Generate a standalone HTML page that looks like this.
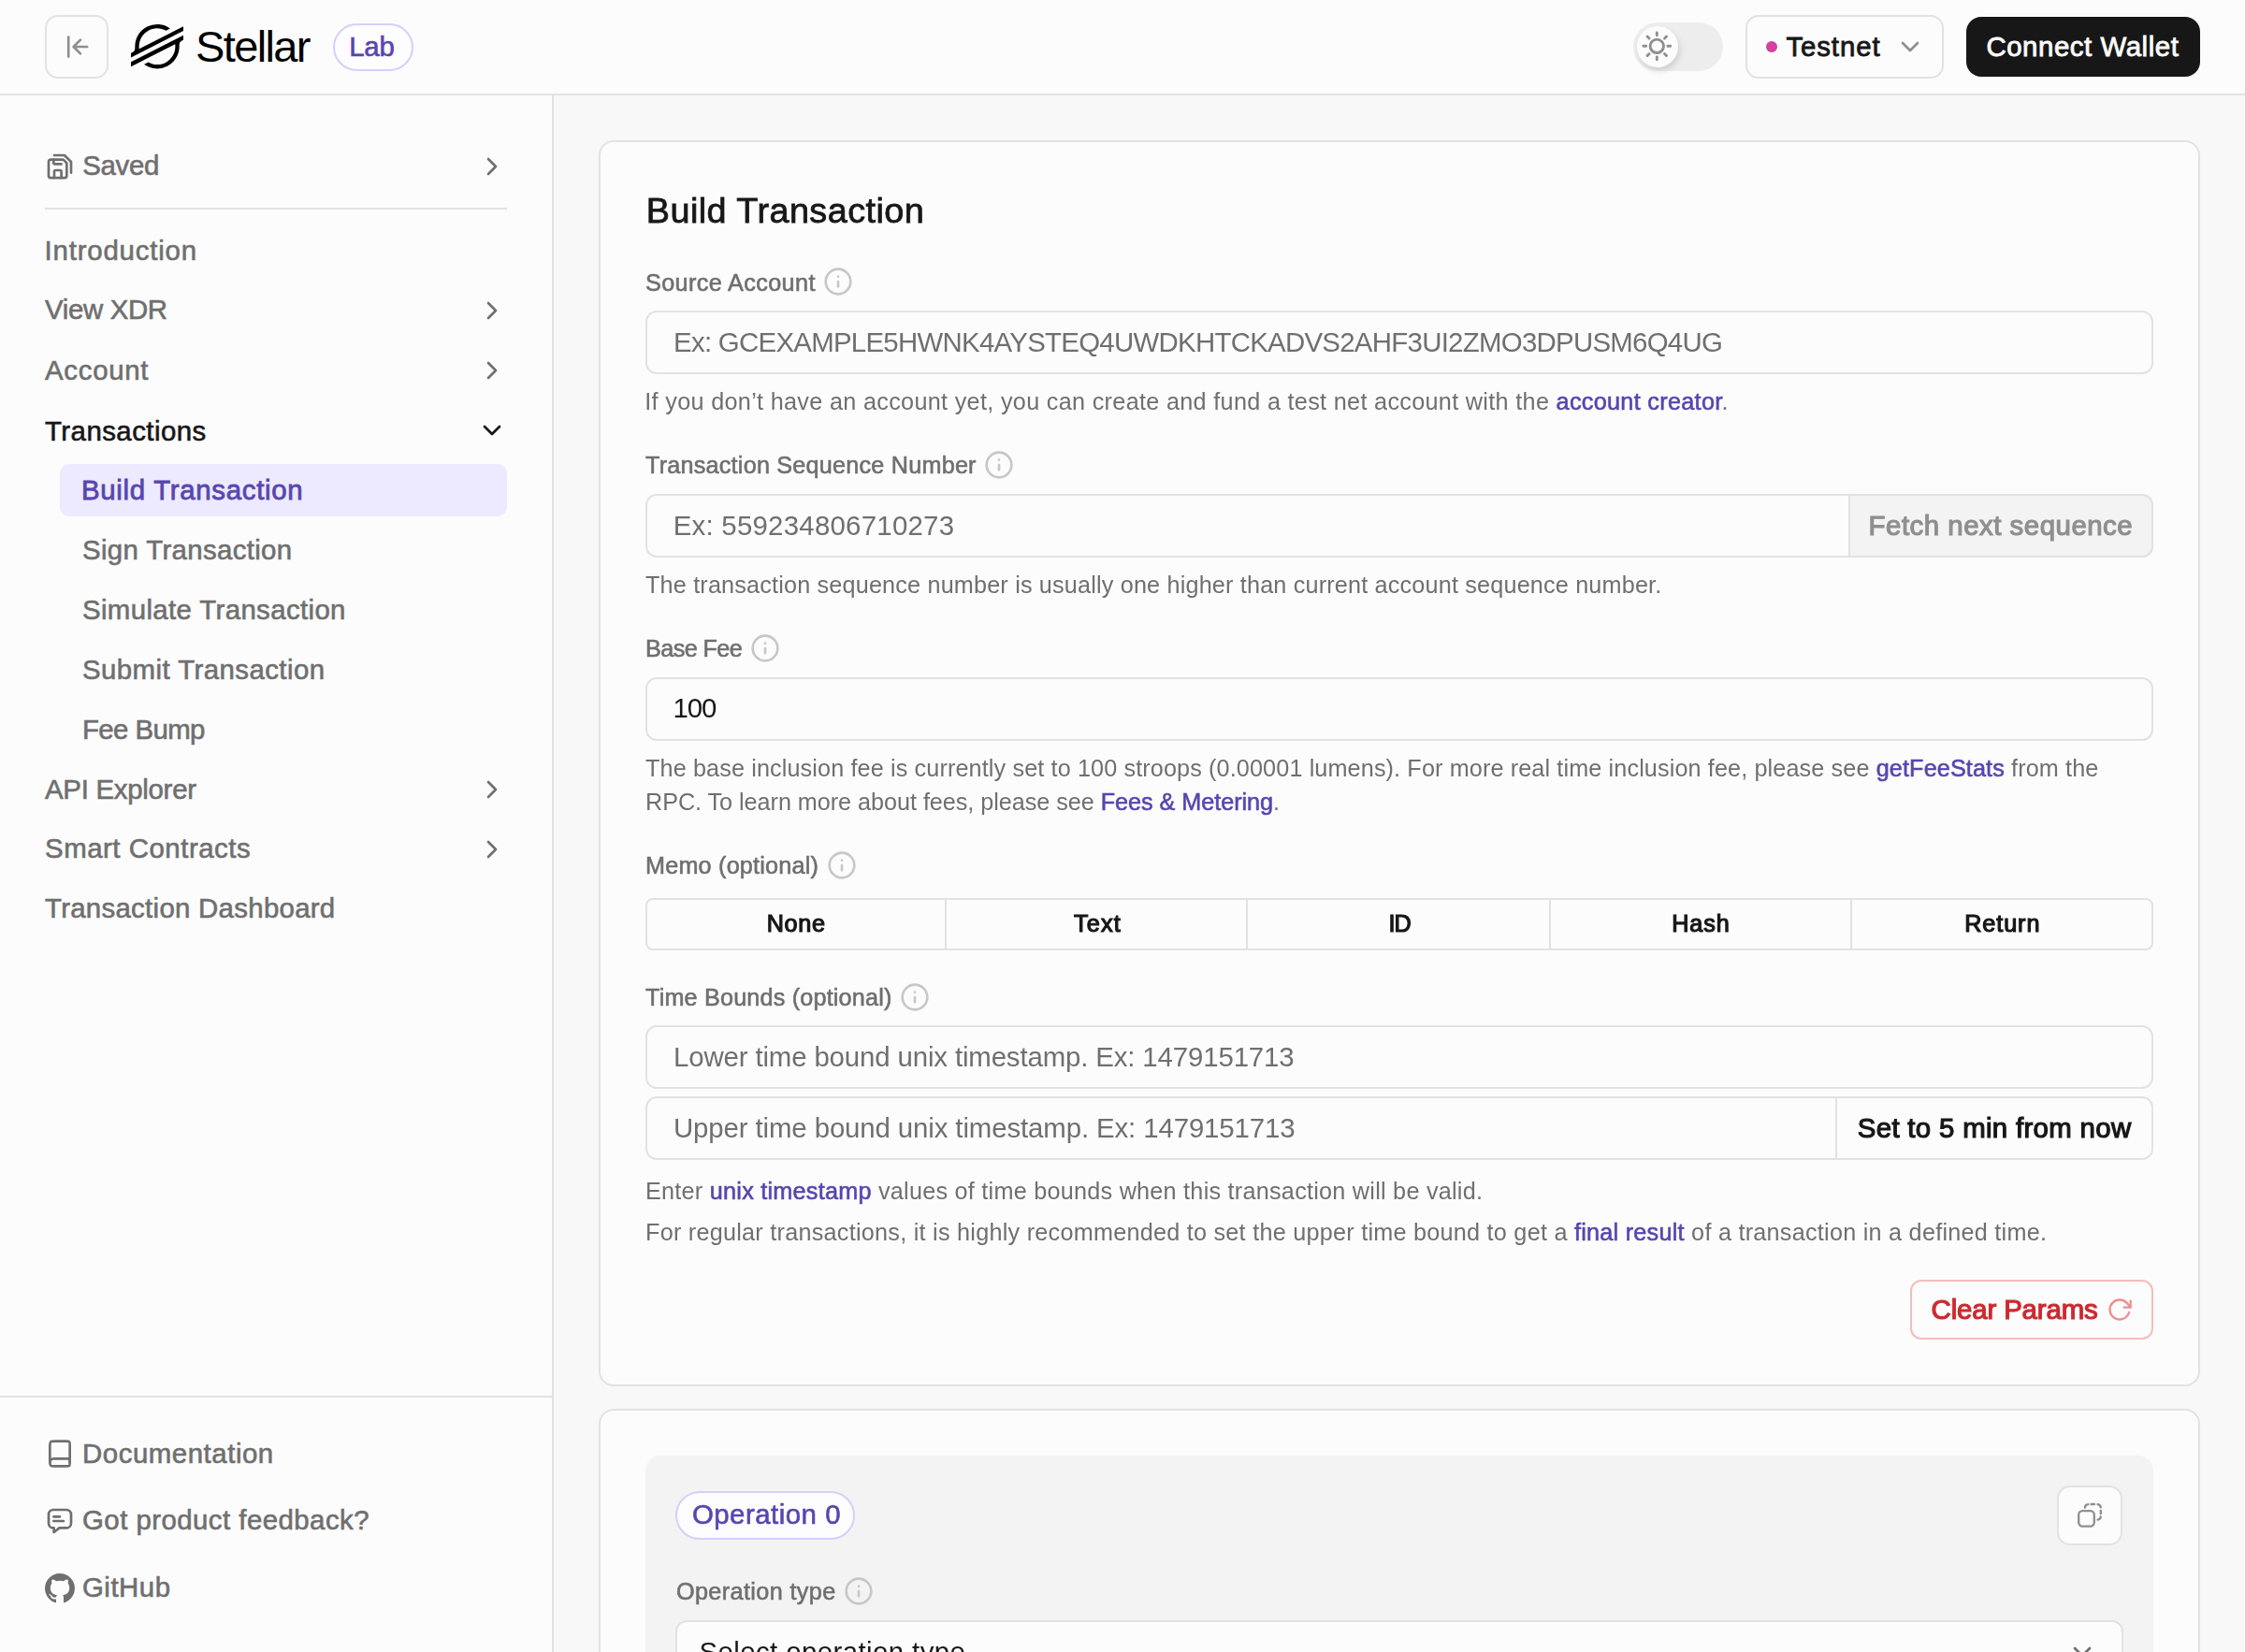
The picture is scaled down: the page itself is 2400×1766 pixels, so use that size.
<!DOCTYPE html>
<html lang="en">
<head>
<meta charset="utf-8">
<title>Stellar Lab - Build Transaction</title>
<style>
@media (min-width: 1800px) { html { zoom: 2; } }
* { box-sizing: border-box; margin: 0; padding: 0; }
html, body { background: #f8f8f8; }
body { width: 1200px; height: 883px; overflow: hidden; position: relative; font-family: "Liberation Sans", sans-serif; color: #171717; -webkit-font-smoothing: antialiased; }
.a { position: absolute; white-space: nowrap; }
.f12 { font-size: 12.6px; line-height: 18px; }
.f14 { font-size: 14.7px; line-height: 20px; }
.f19 { font-size: 18.9px; line-height: 28px; }
.b { font-weight: 700; }
.m { -webkit-text-stroke: 0.3px currentColor; }
.sb { -webkit-text-stroke: 0.4px currentColor; }
.sb2 { -webkit-text-stroke: 0.6px currentColor; }
.g11 { color: #6f6f6f; }
.g9 { color: #8f8f8f; }
.lnk { color: #5746af; }
.box { position: absolute; border: 1px solid #e2e2e2; }
svg { position: absolute; overflow: visible; }
.ic { fill: none; stroke-width: 2; stroke-linecap: round; stroke-linejoin: round; }
</style>
</head>
<body>

<!-- HEADER -->
<div class="box" style="left:0;top:0;width:1200px;height:51px;background:#fcfcfc;border-width:0 0 1px 0;"></div>
<div class="box" style="left:24px;top:8px;width:34px;height:34px;border-radius:7px;background:#fcfcfc;"></div>
<svg style="left:24px;top:8px" width="34" height="34" viewBox="0 0 34 34"><g fill="none" stroke="#8f8f8f" stroke-width="1.33" stroke-linecap="round" stroke-linejoin="round"><path d="M12.6 11.8V22.3"/><path d="M22.6 17H15.4M19 13.3L15.3 17L19 20.7"/></g></svg>
<svg style="left:70px;top:13px" width="28" height="23.7" viewBox="0 0 236.36 200"><path fill="#000" d="M203,26.16l-28.46,14.5-137.43,70a82.49,82.49,0,0,1-.7-10.69A81.87,81.87,0,0,1,158.2,28.6l16.29-8.3,2.43-1.24A100,100,0,0,0,18.18,100q0,3.82.29,7.61a18.19,18.19,0,0,1-9.88,17.58L0,129.57V150l25.29-12.89,0,0,8.19-4.18,8.07-4.11v0L186.43,55l16.28-8.290,33.65-17.15V9.14Z"/><path fill="#000" d="M236.36,50,49.78,145,33.5,153.310,0,170.38v20.41l33.27-16.95,28.46-14.5L199.3,89.24A83.450,83.450,0,0,1,200,100,81.87,81.87,0,0,1,78.09,171.36l-1,.53-17.66,9A100,100,0,0,0,218.18,100c0-2.57-.1-5.14-.29-7.68a18.2,18.2,0,0,1,9.87-17.58l8.6-4.38Z"/></svg>
<div id="h_stellar" class="a" style="left:104.50px;top:11px;font-size:23.5px;line-height:28px;letter-spacing:-0.817px;color:#000;">Stellar</div>
<div class="box" style="left:178px;top:12.25px;width:43px;height:25.5px;border-radius:13px;border-color:#d7cff9;background:#fdfcfe;"></div>
<div id="h_lab" class="a f14 lnk m" style="left:186.6px;top:15.1px;letter-spacing:-0.1px;">Lab</div>

<!-- theme toggle -->
<div class="a" style="left:873px;top:12px;width:48px;height:26px;border-radius:13px;background:#ededed;"></div>
<div class="a" style="left:875px;top:14px;width:22px;height:22px;border-radius:11px;background:#fcfcfc;box-shadow:1px 2px 3px rgba(0,0,0,0.12);"></div>
<svg style="left:877.1px;top:16.2px" width="17.3" height="17.3" viewBox="0 0 24 24"><g class="ic" stroke="#8f8f8f" stroke-width="1.85"><path d="M12 2V4M12 20V22M4 12H2M6.31 6.31L4.9 4.9M17.69 6.31L19.1 4.9M6.31 17.69L4.9 19.1M17.69 17.69L19.1 19.1M22 12H20M17 12C17 14.76 14.76 17 12 17C9.24 17 7 14.76 7 12C7 9.24 9.24 7 12 7C14.76 7 17 9.24 17 12Z"/></g></svg>

<!-- network -->
<div class="box" style="left:933px;top:8px;width:106px;height:34px;border-radius:7px;background:#fcfcfc;"></div>
<div class="a" style="left:944px;top:21.85px;width:6px;height:6px;border-radius:3px;background:#d6409f;"></div>
<div id="h_testnet" class="a f14 sb" style="left:954.70px;top:14.86px;letter-spacing:0.458px;">Testnet</div>
<svg style="left:1013px;top:17px" width="16" height="16" viewBox="0 0 24 24"><path class="ic" stroke="#8f8f8f" d="M6 9l6 6 6-6"/></svg>

<!-- connect wallet -->
<div class="a" style="left:1051px;top:9px;width:125px;height:32px;border-radius:8px;background:#171717;"></div>
<div id="h_cw" class="a f14 sb" style="left:1061.70px;top:14.9px;color:#fcfcfc;letter-spacing:0.278px;">Connect Wallet</div>

<!-- SIDEBAR -->
<div class="box" style="left:0;top:51px;width:296px;height:832px;background:#fcfcfc;border-width:0 1px 0 0;"></div>

<!-- saved -->
<svg style="left:24px;top:81px" width="16" height="16" viewBox="0 0 24 24"><g class="ic" stroke="#6f6f6f"><path d="M7.5 3H15.7L21 8.3V17"/><path d="M4.6 6.5H14.75L17.5 9.25V19.5A1.6 1.6 0 0 1 15.9 21.1H4.6A1.6 1.6 0 0 1 3 19.5V8.1A1.6 1.6 0 0 1 4.6 6.5Z"/><path d="M7 6.5V9A1 1 0 0 0 8 10H13.2"/><path d="M7.5 21V16A1 1 0 0 1 8.5 15H12.2A1 1 0 0 1 13.2 16V21"/></g></svg>
<div id="s_saved" class="a f14 g11 m" style="left:44.10px;top:78.66px;letter-spacing:-0.150px;">Saved</div>
<svg style="left:255px;top:81px" width="16" height="16" viewBox="0 0 24 24"><path class="ic" stroke="#6f6f6f" d="M9 18l6-6-6-6"/></svg>
<div class="a" style="left:24px;top:111px;width:247px;height:1px;background:#e2e2e2;"></div>

<div id="s_intro" class="a f14 g11 m" style="left:23.80px;top:123.8px;letter-spacing:0.400px;">Introduction</div>
<div id="s_xdr" class="a f14 g11 m" style="left:24.00px;top:155.7px;letter-spacing:-0.170px;">View XDR</div>
<svg style="left:255px;top:158px" width="16" height="16" viewBox="0 0 24 24"><path class="ic" stroke="#6f6f6f" d="M9 18l6-6-6-6"/></svg>
<div id="s_acct" class="a f14 g11 m" style="left:24.00px;top:187.9px;letter-spacing:0.359px;">Account</div>
<svg style="left:255px;top:190px" width="16" height="16" viewBox="0 0 24 24"><path class="ic" stroke="#6f6f6f" d="M9 18l6-6-6-6"/></svg>
<div id="s_tx" class="a f14 m" style="left:24.00px;top:220.4px;color:#171717;letter-spacing:0.233px;">Transactions</div>
<svg style="left:255px;top:222px" width="16" height="16" viewBox="0 0 24 24"><path class="ic" stroke="#171717" d="M6 9l6 6 6-6"/></svg>

<div class="a" style="left:32px;top:248px;width:239px;height:28px;border-radius:5px;background:#ede9fe;"></div>
<div id="s_build" class="a f14 sb lnk" style="left:43.50px;top:251.8px;letter-spacing:0.352px;">Build Transaction</div>
<div id="s_sign" class="a f14 g11 m" style="left:44.00px;top:283.9px;letter-spacing:0.173px;">Sign Transaction</div>
<div id="s_sim" class="a f14 g11 m" style="left:44.00px;top:315.8px;letter-spacing:0.184px;">Simulate Transaction</div>
<div id="s_sub" class="a f14 g11 m" style="left:44.00px;top:347.9px;letter-spacing:0.220px;">Submit Transaction</div>
<div id="s_fee" class="a f14 g11 m" style="left:44.00px;top:379.9px;letter-spacing:-0.299px;">Fee Bump</div>

<div id="s_api" class="a f14 g11 m" style="left:24.00px;top:411.9px;letter-spacing:-0.136px;">API Explorer</div>
<svg style="left:255px;top:414px" width="16" height="16" viewBox="0 0 24 24"><path class="ic" stroke="#6f6f6f" d="M9 18l6-6-6-6"/></svg>
<div id="s_sc" class="a f14 g11 m" style="left:24.00px;top:443.6px;letter-spacing:0.263px;">Smart Contracts</div>
<svg style="left:255px;top:446px" width="16" height="16" viewBox="0 0 24 24"><path class="ic" stroke="#6f6f6f" d="M9 18l6-6-6-6"/></svg>
<div id="s_dash" class="a f14 g11 m" style="left:24.00px;top:475.7px;letter-spacing:0.145px;">Transaction Dashboard</div>

<div class="a" style="left:0;top:746px;width:295px;height:1px;background:#e2e2e2;"></div>
<svg style="left:24px;top:769px" width="16" height="16" viewBox="0 0 24 24"><g class="ic" stroke="#6f6f6f"><path d="M20 19V16H7A3 3 0 0 0 4 19"/><path d="M8.8 22H16.8C18.5 22 19.2 22 19.6 21.7C20 21.3 20 20.5 20 18.8V5.2C20 3.5 20 2.8 19.6 2.4C19.2 2 18.5 2 16.8 2H8.8C6.1 2 5.3 2 4.7 2.4C4 3 4 4.1 4 6.8V17.2C4 19.9 4 20.9 4.7 21.5C5.3 22 6.1 22 8.8 22Z"/></g></svg>
<div id="s_doc" class="a f14 g11 m" style="left:44.05px;top:767.1px;letter-spacing:0.267px;">Documentation</div>
<svg style="left:24px;top:805px" width="16" height="16" viewBox="0 0 24 24"><g class="ic" stroke="#6f6f6f"><path d="M7 8.5H12M7 12H15"/><path d="M7.2 17.5V21L11.6 17.5H17.3A3.7 3.7 0 0 0 21 13.8V6.7A3.7 3.7 0 0 0 17.3 3H6.7A3.7 3.7 0 0 0 3 6.7V13.8A3.7 3.7 0 0 0 6.7 17.5Z"/></g></svg>
<div id="s_fb" class="a f14 g11 m" style="left:44.00px;top:802.4px;letter-spacing:0.230px;">Got product feedback?</div>
<svg style="left:24px;top:841px" width="16" height="16" viewBox="0 0 16 16"><path fill="#6f6f6f" d="M8 0C3.58 0 0 3.58 0 8c0 3.54 2.29 6.53 5.47 7.59.4.07.55-.17.55-.38 0-.19-.01-.82-.01-1.49-2.01.37-2.53-.49-2.69-.94-.09-.23-.48-.94-.82-1.13-.28-.15-.68-.52-.01-.53.63-.01 1.08.58 1.23.82.72 1.21 1.87.87 2.33.66.07-.52.28-.87.51-1.07-1.78-.2-3.64-.89-3.640-3.95 0-.87.31-1.59.82-2.15-.08-.2-.36-1.02.08-2.12 0 0 .67-.21 2.2.82.64-.18 1.32-.27 2-.27.68 0 1.36.09 2 .27 1.53-1.04 2.2-.82 2.2-.82.44 1.1.16 1.92.08 2.12.51.56.82 1.27.82 2.15 0 3.07-1.87 3.75-3.65 3.95.29.25.54.73.54 1.48 0 1.07-.01 1.93-.01 2.2 0 .21.15.46.55.38A8.013 8.013 0 0016 8c0-4.42-3.58-8-8-8z"/></svg>
<div id="s_gh" class="a f14 g11 m" style="left:44.00px;top:838.7px;letter-spacing:0.250px;">GitHub</div>


<!-- MAIN -->
<div id="mainwrap" style="position:absolute;left:0;top:0;width:1200px;height:883px;will-change:transform;">

<!-- CARD 1 -->
<div class="box" style="left:320px;top:75px;width:856px;height:666px;border-radius:8px;background:#fcfcfc;"></div>
<div id="m_title" class="a f19 m" style="-webkit-text-stroke:0.4px #171717;left:345.40px;top:98.45px;color:#171717;letter-spacing:0.219px;">Build Transaction</div>

<div id="m_l1" class="a f12 g11 m" style="left:345.00px;top:141.8px;letter-spacing:0.191px;">Source Account</div>
<svg style="left:440px;top:142.7px" width="16" height="16" viewBox="0 0 24 24"><g class="ic" stroke="#c7c7c7"><circle cx="12" cy="12" r="10"/><path d="M12 16V12M12 8H12.01"/></g></svg>
<div class="box" style="left:345px;top:166px;width:806px;height:34px;border-radius:6px;background:#fcfcfc;"></div>
<div id="m_p1" class="a f14 g11" style="left:360.05px;top:172.9px;letter-spacing:-0.357px;">Ex: GCEXAMPLE5HWNK4AYSTEQ4UWDKHTCKADVS2AHF3UI2ZMO3DPUSM6Q4UG</div>
<div id="m_h1" class="a f12 g11" style="left:344.65px;top:205.6px;letter-spacing:0.161px;">If you don’t have an account yet, you can create and fund a test net account with the <span class="lnk m">account creator</span>.</div>

<div id="m_l2" class="a f12 g11 m" style="left:345.00px;top:239.6px;letter-spacing:0.112px;">Transaction Sequence Number</div>
<svg style="left:525.75px;top:240.6px" width="16" height="16" viewBox="0 0 24 24"><g class="ic" stroke="#c7c7c7"><circle cx="12" cy="12" r="10"/><path d="M12 16V12M12 8H12.01"/></g></svg>
<div class="box" style="left:345px;top:264px;width:806px;height:34px;border-radius:6px;background:#fcfcfc;"></div>
<div class="box" style="left:988px;top:264px;width:163px;height:34px;border-radius:0 6px 6px 0;background:#f3f3f3;"></div>
<div id="m_p2" class="a f14 g11" style="left:359.85px;top:270.9px;letter-spacing:0.126px;">Ex: 559234806710273</div>
<div id="m_fetch" class="a f14 sb2 g9" style="left:998.80px;top:270.9px;letter-spacing:0.256px;">Fetch next sequence</div>
<div id="m_h2" class="a f12 g11" style="left:345.00px;top:303.4px;letter-spacing:0.092px;">The transaction sequence number is usually one higher than current account sequence number.</div>

<div id="m_l3" class="a f12 g11 m" style="left:345.00px;top:337.4px;letter-spacing:-0.287px;">Base Fee</div>
<svg style="left:401px;top:338.35px" width="16" height="16" viewBox="0 0 24 24"><g class="ic" stroke="#c7c7c7"><circle cx="12" cy="12" r="10"/><path d="M12 16V12M12 8H12.01"/></g></svg>
<div class="box" style="left:345px;top:362px;width:806px;height:34px;border-radius:6px;background:#fcfcfc;"></div>
<div id="m_p3" class="a f14" style="left:359.70px;top:368.7px;color:#171717;letter-spacing:-0.500px;">100</div>
<div id="m_h3a" class="a f12 g11" style="left:345.00px;top:401.6px;letter-spacing:0.064px;">The base inclusion fee is currently set to 100 stroops (0.00001 lumens). For more real time inclusion fee, please see <span class="lnk m">getFeeStats</span> from the</div>
<div id="m_h3b" class="a f12 g11" style="left:345.00px;top:419.4px;letter-spacing:-0.017px;">RPC. To learn more about fees, please see <span class="lnk m">Fees &amp; Metering</span>.</div>

<div id="m_l4" class="a f12 g11 m" style="left:345.00px;top:453.6px;letter-spacing:0.107px;">Memo (optional)</div>
<svg style="left:442px;top:454.6px" width="16" height="16" viewBox="0 0 24 24"><g class="ic" stroke="#c7c7c7"><circle cx="12" cy="12" r="10"/><path d="M12 16V12M12 8H12.01"/></g></svg>
<div class="box" style="left:345px;top:480px;width:806px;height:28px;border-radius:4px;background:#fcfcfc;"></div>
<div class="a" style="left:505px;top:481px;width:1px;height:26px;background:#e2e2e2;"></div>
<div class="a" style="left:666px;top:481px;width:1px;height:26px;background:#e2e2e2;"></div>
<div class="a" style="left:828px;top:481px;width:1px;height:26px;background:#e2e2e2;"></div>
<div class="a" style="left:989px;top:481px;width:1px;height:26px;background:#e2e2e2;"></div>
<div id="m_t1" class="a f12 sb2" style="left:345.0px;top:484.5px;width:161.2px;text-align:center;color:#171717;letter-spacing:0.35px;">None</div>
<div id="m_t2" class="a f12 sb2" style="left:506.2px;top:484.5px;width:161.2px;text-align:center;color:#171717;letter-spacing:0.6px;">Text</div>
<div id="m_t3" class="a f12 sb2" style="left:667.4px;top:484.5px;width:161.2px;text-align:center;color:#171717;letter-spacing:-0.6px;">ID</div>
<div id="m_t4" class="a f12 sb2" style="left:828.6px;top:484.5px;width:161.2px;text-align:center;color:#171717;letter-spacing:0.45px;">Hash</div>
<div id="m_t5" class="a f12 sb2" style="left:989.8px;top:484.5px;width:161.2px;text-align:center;color:#171717;letter-spacing:0.47px;">Return</div>

<div id="m_l5" class="a f12 g11 m" style="left:345.00px;top:523.8px;letter-spacing:0.093px;">Time Bounds (optional)</div>
<svg style="left:481px;top:524.8px" width="16" height="16" viewBox="0 0 24 24"><g class="ic" stroke="#c7c7c7"><circle cx="12" cy="12" r="10"/><path d="M12 16V12M12 8H12.01"/></g></svg>
<div class="box" style="left:345px;top:548px;width:806px;height:34px;border-radius:6px;background:#fcfcfc;"></div>
<div id="m_p4" class="a f14 g11" style="left:360.00px;top:554.9px;letter-spacing:-0.068px;">Lower time bound unix timestamp. Ex: 1479151713</div>
<div class="box" style="left:345px;top:586px;width:806px;height:34px;border-radius:6px;background:#fcfcfc;"></div>
<div class="a" style="left:981px;top:587px;width:1px;height:32px;background:#e2e2e2;"></div>
<div id="m_p5" class="a f14 g11" style="left:360.00px;top:592.9px;letter-spacing:-0.057px;">Upper time bound unix timestamp. Ex: 1479151713</div>
<div id="m_set5" class="a f14 sb2" style="left:992.90px;top:592.9px;color:#171717;letter-spacing:0.162px;">Set to 5 min from now</div>
<div id="m_h4" class="a f12 g11" style="left:345.00px;top:627.6px;letter-spacing:0.128px;">Enter <span class="lnk m">unix timestamp</span> values of time bounds when this transaction will be valid.</div>
<div id="m_h5" class="a f12 g11" style="left:345.00px;top:649.6px;letter-spacing:0.129px;">For regular transactions, it is highly recommended to set the upper time bound to get a <span class="lnk m">final result</span> of a transaction in a defined time.</div>

<div class="box" style="left:1021px;top:684px;width:130px;height:32px;border-radius:6px;border-color:#f6bcbc;background:#fcfcfc;"></div>
<div id="m_clear" class="a f14 sb2" style="left:1032.30px;top:690.1px;color:#cd2b31;letter-spacing:-0.072px;">Clear Params</div>
<svg style="left:1126px;top:693px" width="14" height="14" viewBox="0 0 24 24"><g class="ic" stroke="#eb9091"><path d="M22 10C22 10 19.995 7.268 18.366 5.638C16.737 4.008 14.486 3 12 3C7.029 3 3 7.029 3 12C3 16.971 7.029 21 12 21C16.103 21 19.565 18.254 20.648 14.5M22 10V4M22 10H16"/></g></svg>

<!-- CARD 2 -->
<div class="box" style="left:320px;top:753px;width:856px;height:200px;border-radius:8px;background:#fcfcfc;"></div>
<div class="a" style="left:345px;top:778px;width:806px;height:200px;border-radius:8px;background:#f3f3f3;"></div>
<div class="box" style="left:361px;top:797px;width:96px;height:26px;border-radius:13px;border-color:#d7cff9;background:#fdfcfe;"></div>
<div id="m_op" class="a f14 lnk m" style="left:369.95px;top:799.66px;letter-spacing:0.25px;">Operation 0</div>
<div class="box" style="left:1099.5px;top:794px;width:35px;height:32px;border-radius:7px;background:#fcfcfc;"></div>
<svg style="left:1108px;top:801px" width="18" height="18" viewBox="0 0 18 18"><g fill="none" stroke="#8f8f8f" stroke-width="1.17" stroke-linecap="round" stroke-linejoin="round"><rect x="3.1" y="6.6" width="8.3" height="8.2" rx="2"/><path d="M6.45 4.85A1.9 1.9 0 0 1 8.2 3.05M9.8 3H11.5M13.25 3.05A1.9 1.9 0 0 1 14.9 4.7M14.9 6.45V8.05M14.9 9.65A1.9 1.9 0 0 1 13.25 11.3"/></g></svg>
<div id="m_l6" class="a f12 g11 m" style="left:361.50px;top:841.5px;letter-spacing:0.193px;">Operation type</div>
<svg style="left:451px;top:842.45px" width="16" height="16" viewBox="0 0 24 24"><g class="ic" stroke="#c7c7c7"><circle cx="12" cy="12" r="10"/><path d="M12 16V12M12 8H12.01"/></g></svg>
<div class="box" style="left:361px;top:866px;width:774px;height:34px;border-radius:6px;background:#fcfcfc;"></div>
<div id="m_sel" class="a f14" style="left:373.70px;top:872.9px;color:#171717;letter-spacing:0.210px;">Select operation type</div>
<svg style="left:1105px;top:875px" width="16" height="16" viewBox="0 0 24 24"><path class="ic" stroke="#6f6f6f" d="M6 9l6 6 6-6"/></svg>


</div>
</body>
</html>
